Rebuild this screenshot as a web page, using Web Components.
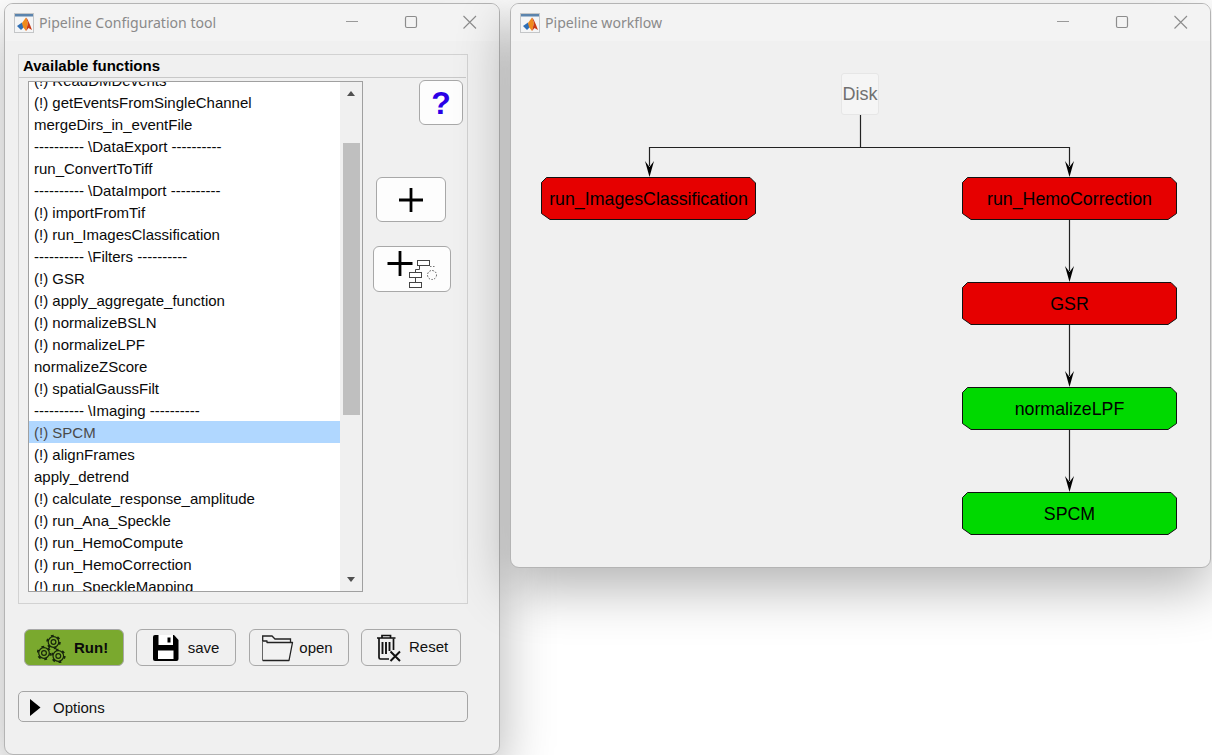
<!DOCTYPE html>
<html><head><meta charset="utf-8"><title>Pipeline</title>
<style>
html,body{margin:0;height:100%;background:#fff;overflow:hidden;font-family:"Liberation Sans",Arial,sans-serif;}
desk-top{width:1212px;height:755px}
</style></head><body>
<desk-top>
<app-window slot="w" title-text="Pipeline Configuration tool" style="left:4px;top:3px;width:496px;height:752px">
  <div style="display:flex;flex-direction:column;padding:13px 0 0 13px;height:100%;box-sizing:border-box">
    <group-panel heading="Available functions">
      <func-list></func-list>
      <div slot="side" style="display:flex;flex-direction:column;align-items:flex-start;">
        <ui-button style="width:44px;height:45px;margin-left:56px;margin-top:-1px" white="1"><span style="font:bold 32px 'Liberation Sans',sans-serif;color:#2a00e6;line-height:1">?</span></ui-button>
        <ui-button style="width:70px;height:45px;margin-left:13px;margin-top:52px" white="1"><svg width="26" height="26" viewBox="0 0 26 26" style="margin-top:1px"><path d="M13 1V25M1 13H25" stroke="#000" stroke-width="2.800"/></svg></ui-button>
        <ui-button style="width:78px;height:46px;margin-left:10px;margin-top:24px" white="1"><svg width="76" height="44" viewBox="0 0 76 44"><path d="M26 4V29M13.500 16.500H38.500" stroke="#000" stroke-width="2.800"/><g fill="#fff" stroke="#444" stroke-width="1"><rect x="43.500" y="13.500" width="12" height="5"/><rect x="35.500" y="25.500" width="12" height="5"/><rect x="35.500" y="35.500" width="12" height="5"/></g><path d="M45.500 19V22.500H41.500V25M41.500 31V35" fill="none" stroke="#444"/><path d="M56 19.500h5" stroke="#777" stroke-dasharray="1.500 1.500"/><circle cx="58" cy="28" r="4.500" fill="none" stroke="#555" stroke-dasharray="1.500 1.500"/></svg></ui-button>
      </div>
    </group-panel>
    <div style="display:flex;margin:25px 0 0 6px;gap:12px">
      <ui-button style="width:100px;height:37px;justify-content:flex-start;padding-left:12px" run="1"><svg width="30" height="30" viewBox="0 0 30 30" style="flex:none"><g fill="none" stroke="#16240c"><circle cx="16.500" cy="9" r="5.300" stroke-width="1.200"/><circle cx="16.500" cy="9" r="6.400" stroke-width="1.800" stroke-dasharray="2.800 3.900"/><circle cx="16.500" cy="9" r="2.400" stroke-width="1.200"/><circle cx="7" cy="20" r="5.300" stroke-width="1.200"/><circle cx="7" cy="20" r="6.400" stroke-width="1.800" stroke-dasharray="2.800 3.900"/><circle cx="7" cy="20" r="2.400" stroke-width="1.200"/><circle cx="21.300" cy="23" r="5.300" stroke-width="1.200"/><circle cx="21.300" cy="23" r="6.400" stroke-width="1.800" stroke-dasharray="2.800 3.900"/><circle cx="21.300" cy="23" r="2.400" stroke-width="1.200"/></g></svg><b style="margin-left:7px">Run!</b></ui-button>
      <ui-button style="width:100px;height:37px"><svg width="26" height="26" viewBox="0 0 26 26" style="margin-right:9px;flex:none"><path d="M2 0H21L25.500 5V24a2 2 0 0 1-2 2H2a2 2 0 0 1-2-2V2a2 2 0 0 1 2-2Z" fill="#000"/><rect x="5.500" y="0" width="14.500" height="10" fill="#fff"/><rect x="14.500" y="2.500" width="3" height="5" fill="#000"/><rect x="5" y="15.500" width="15.500" height="8.500" fill="#fff"/></svg><span>save</span></ui-button>
      <ui-button style="width:100px;height:37px;margin-left:1px"><svg width="32" height="28" viewBox="0 0 32 28" style="margin-right:5px;margin-left:-3px;flex:none"><path d="M.7 26.500V2H10L13 5H28.500V8" fill="none" stroke="#222" stroke-width="1.300"/><path d="M.7 26.500H27L30.500 8.500H5V7H.7" fill="#f2f2f2" stroke="#222" stroke-width="1.300" stroke-linejoin="round"/></svg><span>open</span></ui-button>
      <ui-button style="width:100px;height:37px;justify-content:flex-start;padding-left:14px"><svg width="26" height="28" viewBox="0 0 26 28" style="margin-right:7px;flex:none"><path d="M1 4H19.500M6 4V1.500H14.500V4M3 4.500V23.500C3 24.500 3.500 25 4.500 25H13" fill="none" stroke="#111" stroke-width="1.700"/><path d="M17.500 4.500V16" stroke="#111" stroke-width="1.700"/><path d="M6.500 8V20M10 8V20M13.500 8V17" stroke="#111" stroke-width="1.900"/><path d="M14.500 17.500L24 27M24 17.500L14.500 27" stroke="#111" stroke-width="2"/></svg><span style="position:relative;top:-1px">Reset</span></ui-button>
    </div>
    <div style="margin-top:25px;width:450px;height:31px;box-sizing:border-box;border:1px solid #a5a5a5;border-radius:5px;display:flex;align-items:center;font-size:15px;color:#111;padding-top:1px">
      <svg width="11" height="17" viewBox="0 0 11 17" style="margin-left:11px;margin-right:12px;flex:none"><path d="M0 0L10.500 8.500L0 17Z" fill="#000"/></svg><span>Options</span>
    </div>
  </div>
</app-window>
<app-window slot="w" title-text="Pipeline workflow" style="left:510px;top:3px;width:701px;height:565px">
  <work-flow></work-flow>
</app-window>
</desk-top>
<template id="t-desk"><style>:host{display:block;position:relative;overflow:hidden}</style><slot name="w"></slot></template>
<template id="t-win"><style>
:host{display:flex;flex-direction:column;position:absolute;box-sizing:border-box;background:#f0f0f0;border:1px solid #b4b4b4;border-radius:9px;box-shadow:0 20px 54px rgba(0,0,0,.3);overflow:hidden;color:#000}
.bar{height:37px;flex:none;background:#f3f3f3;display:flex;align-items:center;padding-left:9px;font:14.100px "Noto Sans","Open Sans",sans-serif;color:#8a8a8a}
.bar svg.logo{margin-right:5px;flex:none}
.ctl{margin-left:auto;margin-right:1px;display:block;width:154px;height:37px;flex:none}
.body{flex:1;min-height:0}
</style><div class="bar"><svg class="logo" width="20" height="20" viewBox="0 0 20 20"><rect x=".5" y=".5" width="19" height="19" fill="#f4f5f6" stroke="#c4c6c8"/><rect x="1" y="1" width="18" height="2.500" fill="#5b84ad"/><path d="M3 13L8 9.500L10 14L7 17Z" fill="#2f6fb5"/><path d="M8 10L12 4.500L14 10L12 18L9 14Z" fill="#ef8a1c"/><path d="M12 4.500Q14 6 18 17L14.500 15L12 18L14 10Z" fill="#c93a14"/></svg><span id="t"></span><svg class="ctl" viewBox="0 0 154 37"><path d="M2 17.500H14" stroke="#999"/><rect x="61.500" y="12.500" width="11" height="11" rx="1.500" fill="none" stroke="#8c8c8c" stroke-width="1.200"/><path d="M119.500 12L132 24.500M132 12L119.500 24.500" stroke="#8c8c8c" stroke-width="1.100"/></svg></div><div class="body"><slot></slot></div></template>
<template id="t-panel"><style>
:host{display:block;width:450px;height:550px;box-sizing:border-box;border:1px solid #d2d2d2;flex:none}
.h{height:23px;box-sizing:border-box;border-bottom:1px solid #c8c8c8;font:bold 15px/22px "Liberation Sans",sans-serif;padding-left:4px;margin-right:1px}
.c{display:flex;padding:3px 0 0 9px}
</style><div class="h" id="h"></div><div class="c"><slot></slot><slot name="side"></slot></div></template>
<template id="t-list"><style>
:host{display:flex;width:335px;height:511px;box-sizing:border-box;border:1px solid #a0a0a0;background:#fff;flex:none;overflow:hidden}
.rows{flex:1;min-width:0;overflow:hidden;font:15px/22px "Liberation Sans",sans-serif;color:#0a0a0a}
.in{margin-top:-13px}
.r{height:22px;line-height:23px;padding-left:5px;white-space:nowrap}
.r.s{background:#b0d7ff;color:#4a4a4a}
.sb{width:22px;flex:none;background:#f0f0f0;display:flex;flex-direction:column;align-items:center;position:relative}
.up{width:0;height:0;border:4.500px solid transparent;border-top:0;border-bottom:5px solid #505050;margin-top:9px}
.th{width:17px;height:272px;background:#bfbfbf;margin-top:47px}
.dn{width:0;height:0;border:4.500px solid transparent;border-bottom:0;border-top:5px solid #505050;margin-top:162px}
</style><div class="rows"><div class="in" id="in"></div></div><div class="sb"><div class="up"></div><div class="th"></div><div class="dn"></div></div></template>
<template id="t-btn"><style>
:host{display:flex;box-sizing:border-box;flex:none;align-items:center;justify-content:center;border:1px solid #a8a8a8;border-radius:6px;font:15px "Liberation Sans",sans-serif;color:#111;background:#f0f0f0}
:host([white]){background:#fdfdfd}
:host([run]){background:#7aa92e;color:#0b0b0b}
</style><slot></slot></template>
<template id="t-node"><style>
:host{position:absolute;display:flex;align-items:center;justify-content:center;width:215px;height:43px;font:17.800px "Liberation Sans",sans-serif;color:#000}
svg{position:absolute;left:0;top:0}
span{position:relative;top:.5px;white-space:nowrap}
</style><svg width="215" height="43" viewBox="0 0 215 43"><path id="p" d="M5.500 .5H209L214.500 6V36.500L206 42.500H9L.5 36.500V5.500Z" stroke="#111" stroke-width="1"/></svg><span><slot></slot></span></template>
<template id="t-flow"><style>
:host{display:block;position:relative;width:100%;height:100%;overflow:hidden}
svg{position:absolute;left:0;top:0}
.disk{position:absolute;left:330px;top:32px;width:38px;height:42px;box-sizing:border-box;background:#f5f5f5;border:1px solid #e6e6e6;border-radius:3px;display:flex;align-items:center;justify-content:center;font:18px "Liberation Sans",sans-serif;color:#707070}
</style>
<svg width="699" height="530" viewBox="0 0 699 530"><g fill="none" stroke="#222" stroke-width="1.200"><path d="M349.500 74V106.500H138.500V125M349.500 106.500H558.500V125M558.500 179V230M558.500 284V335M558.500 389V440"/></g>
<g fill="#000"><path d="M138.500 136L134 120L138.500 126L143 120Z"/><path d="M558.500 136L554 120L558.500 126L563 120Z"/><path d="M558.500 241L554 225L558.500 231L563 225Z"/><path d="M558.500 346L554 330L558.500 336L563 330Z"/><path d="M558.500 451L554 435L558.500 441L563 435Z"/></g></svg>
<div class="disk">Disk</div>
<flow-node color="#e60000" style="left:30px;top:136px">run_ImagesClassification</flow-node>
<flow-node color="#e60000" style="left:451px;top:136px">run_HemoCorrection</flow-node>
<flow-node color="#e60000" style="left:451px;top:241px">GSR</flow-node>
<flow-node color="#00d900" style="left:451px;top:346px">normalizeLPF</flow-node>
<flow-node color="#00d900" style="left:451px;top:451px">SPCM</flow-node></template>
<script>
const sr=(el,id)=>{const s=el.attachShadow({mode:"open"});s.appendChild(document.getElementById(id).content.cloneNode(true));return s;};
customElements.define("desk-top",class extends HTMLElement{constructor(){super();sr(this,"t-desk");}});
customElements.define("app-window",class extends HTMLElement{constructor(){super();this.s=sr(this,"t-win");}connectedCallback(){this.s.getElementById("t").textContent=this.getAttribute("title-text");}});
customElements.define("group-panel",class extends HTMLElement{constructor(){super();this.s=sr(this,"t-panel");}connectedCallback(){this.s.getElementById("h").textContent=this.getAttribute("heading");}});
customElements.define("ui-button",class extends HTMLElement{constructor(){super();sr(this,"t-btn");}});
customElements.define("func-list",class extends HTMLElement{constructor(){super();const s=sr(this,"t-list");
const items=["(!) ReadDMDevents","(!) getEventsFromSingleChannel","mergeDirs_in_eventFile","---------- \\DataExport ----------","run_ConvertToTiff","---------- \\DataImport ----------","(!) importFromTif","(!) run_ImagesClassification","---------- \\Filters ----------","(!) GSR","(!) apply_aggregate_function","(!) normalizeBSLN","(!) normalizeLPF","normalizeZScore","(!) spatialGaussFilt","---------- \\Imaging ----------","(!) SPCM","(!) alignFrames","apply_detrend","(!) calculate_response_amplitude","(!) run_Ana_Speckle","(!) run_HemoCompute","(!) run_HemoCorrection","(!) run_SpeckleMapping"];
const w=s.getElementById("in");items.forEach(t=>{const d=document.createElement("div");d.className="r"+(t==="(!) SPCM"?" s":"");d.textContent=t;w.appendChild(d);});}});
customElements.define("flow-node",class extends HTMLElement{constructor(){super();this.s=sr(this,"t-node");}connectedCallback(){this.s.getElementById("p").setAttribute("fill",this.getAttribute("color"));}});
customElements.define("work-flow",class extends HTMLElement{constructor(){super();sr(this,"t-flow");}});
</script>
</body></html>
